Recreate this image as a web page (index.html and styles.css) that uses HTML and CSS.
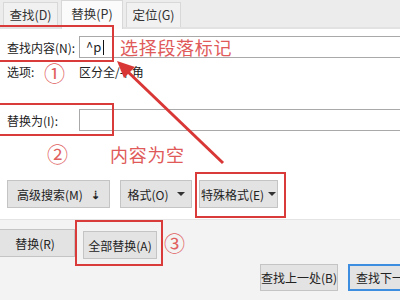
FILE: index.html
```html
<!DOCTYPE html>
<html lang="zh-CN">
<head>
<meta charset="utf-8">
<link rel="stylesheet" href="styles.css">
</head>
<body>
<div class="dialog">
  <div class="tabs">
    <div class="tab">查找(D)</div>
    <div class="tab active">替换(P)</div>
    <div class="tab">定位(G)</div>
  </div>
  <div class="main">
    <div class="field first">
      <span class="label">查找内容(N):</span>
      <div class="input">^p<span class="caret"></span></div>
    </div>
    <div class="options">
      <span class="label">选项:</span>
      <span>区分全/半角</span>
    </div>
    <div class="field second">
      <span class="label">替换为(I):</span>
      <div class="input"></div>
    </div>
    <div class="btnrow">
      <div class="btn w-adv">高级搜索(M) <span class="dd">⇣</span></div>
      <div class="btn w-fmt">格式(O) <span class="tri"></span></div>
      <div class="btn w-spc">特殊格式(E) <span class="tri"></span></div>
    </div>
  </div>
  <div class="footer">
    <div class="row-a">
      <div class="btn w-rep">替换(R)</div>
      <div class="btn w-all">全部替换(A)</div>
    </div>
    <div class="row-b">
      <div class="btn w-prev">查找上一处(B)</div>
      <div class="btn w-next primary">查找下一处</div>
    </div>
  </div>

  <div class="markup">
    <div class="rbox b1"></div>
    <div class="rbox b2"></div>
    <div class="rbox b3"></div>
    <div class="rbox b4"></div>
    <div class="note n1">选择段落标记</div>
    <div class="note n2">内容为空</div>
    <div class="num u1">①</div>
    <div class="num u2">②</div>
    <div class="num u3">③</div>
    <svg class="arrow" width="400" height="300" viewBox="0 0 400 300">
      <line x1="223" y1="163" x2="126" y2="70" stroke="#d93636" stroke-width="3"/>
      <polygon points="117,61 135,67 124,78" fill="#d93636"/>
    </svg>
  </div>
</div>
</body>
</html>
```

FILE: styles.css
```css
html, body {
  margin: 0;
  padding: 0;
  background: #ffffff;
}

.dialog {
  position: relative;
  width: 400px;
  height: 300px;
  overflow: hidden;
  background: #ffffff;
  font-family: "Noto Sans CJK SC", "Noto Sans", sans-serif;
  font-size: 12px;
  color: #222222;
}

.tabs {
  display: flex;
  align-items: flex-end;
  gap: 3px;
  height: 27px;
  padding-left: 3px;
  background: #ececec;
  border-bottom: 2px solid #e2e2e2;
}

.tab {
  width: 55px;
  height: 25px;
  line-height: 24px;
  text-align: center;
  box-sizing: border-box;
  background: #f1f1f1;
  border: 1px solid #d8d8d8;
  border-bottom: none;
  font-size: 12.5px;
  color: #333333;
}

.tab.active {
  width: 62px;
  height: 29px;
  margin-bottom: -2px;
  line-height: 26px;
  background: #fbfbfb;
}

.main {
  padding-left: 7px;
}

.field {
  display: flex;
  align-items: center;
}

.field.first {
  margin-top: 7px;
}

.field.second {
  margin-top: 29px;
}

.label {
  width: 72px;
  flex: none;
}

.input {
  width: 330px;
  height: 22px;
  flex: none;
  box-sizing: border-box;
  border: 1px solid #a9a9a9;
  background: #ffffff;
  padding-left: 6px;
  line-height: 20px;
  font-size: 13px;
  display: flex;
  align-items: center;
}

.caret {
  display: inline-block;
  width: 1px;
  height: 15px;
  margin-left: 2px;
  background: #111111;
}

.options {
  display: flex;
  margin-top: 6px;
  height: 16px;
  line-height: 16px;
}

.btnrow {
  display: flex;
  margin-top: 49px;
}

.btn {
  height: 28px;
  box-sizing: border-box;
  border: 1px solid #c4c4c4;
  background: #e3e3e3;
  display: flex;
  align-items: center;
  justify-content: center;
  gap: 8px;
  color: #222222;
  flex: none;
  white-space: nowrap;
}

.w-adv { width: 103px; }
.w-fmt { width: 72px; margin-left: 10px; }
.w-spc { width: 79px; margin-left: 7px; gap: 4px; }

.dd {
  font-size: 11px;
  font-weight: bold;
}

.tri {
  width: 0;
  height: 0;
  border-left: 4px solid transparent;
  border-right: 4px solid transparent;
  border-top: 4px solid #333333;
}

.footer {
  margin-top: 11px;
  height: 80px;
  background: #f3f3f3;
  border-top: 1px solid #e4e4e4;
}

.row-a {
  display: flex;
  padding-top: 9px;
}

.w-rep { width: 80px; margin-left: -5px; }
.w-all { width: 74px; margin-left: 8px; margin-top: 2px; }

.row-b {
  display: flex;
  gap: 10px;
  padding-left: 260px;
  margin-top: 5px;
}

.w-prev { width: 78px; height: 27px; }
.w-next { width: 72px; height: 27px; justify-content: flex-start; padding-left: 6px; }

.btn.primary {
  border: 2px solid #3d8ee0;
}

.markup {
  position: absolute;
  left: 0;
  top: 0;
  width: 400px;
  height: 300px;
  pointer-events: none;
}

.rbox {
  position: absolute;
  border: 2px solid #d93a3a;
  box-sizing: border-box;
}

.b1 { left: -2px; top: 25px; width: 116px; height: 37px; }
.b2 { left: -2px; top: 103px; width: 116px; height: 33px; }
.b3 { left: 195px; top: 172px; width: 91px; height: 46px; }
.b4 { left: 75px; top: 220px; width: 88px; height: 46px; }

.note {
  position: absolute;
  color: #e05a5a;
  font-size: 18px;
  line-height: 22px;
  letter-spacing: 0.7px;
  white-space: nowrap;
}

.n1 { left: 120px; top: 36px; }
.n2 { left: 110px; top: 143px; }

.num {
  position: absolute;
  color: #e06060;
  font-size: 21px;
  line-height: 22px;
}

.u1 { left: 44px; top: 61px; }
.u2 { left: 47px; top: 142px; }
.u3 { left: 164px; top: 231px; }

.arrow {
  position: absolute;
  left: 0;
  top: 0;
}
```
